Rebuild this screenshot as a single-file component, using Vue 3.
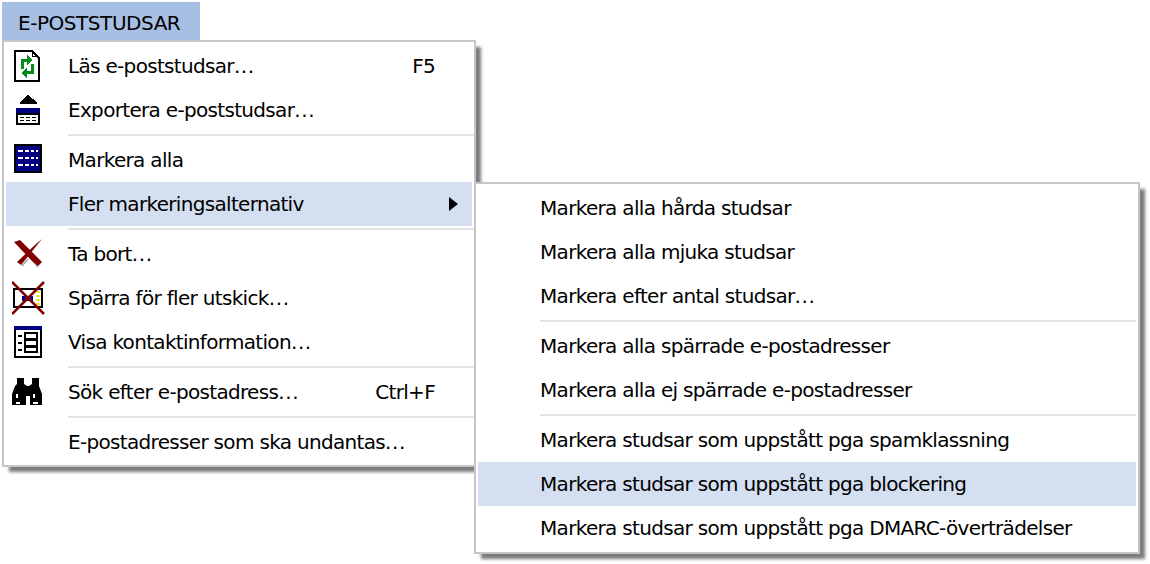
<template>
  <div class="page">
    <div class="title">E-POSTSTUDSAR</div>
    <div class="menu main">
      <template v-for="(item, i) in mainItems" :key="i">
        <div v-if="item.sep" class="sep"></div>
        <div v-else class="row" :class="{ active: item.sub }">
          <span class="icon">
            <svg v-if="item.icon === 'read'" width="34" height="36" viewBox="0 0 34 36" shape-rendering="crispEdges">
              <path d="M3 3H20L27 10V33H3Z" fill="#fff" stroke="#000" stroke-width="2" />
              <path d="M20 3V8H25V10" fill="none" stroke="#000" stroke-width="1" />
              <path d="M15 7L21 12L15 17V14H12V21H9V11H15Z" fill="#0a8a1c" />
              <path d="M15 30L9 25L15 20V23H19V16H22V26H15Z" fill="#0a8a1c" />
            </svg>
            <svg v-else-if="item.icon === 'export'" width="34" height="36" viewBox="0 0 34 36" shape-rendering="crispEdges">
              <path d="M16 3L25 10H8Z" fill="#000" />
              <rect x="8" y="10" width="17" height="2" fill="#000" />
              <rect x="4" y="16" width="24" height="6" fill="#000080" />
              <rect x="5" y="22" width="22" height="10" fill="#fff" stroke="#000" stroke-width="2" />
              <path d="M8 25h4v1H8zM14 25h4v1h-4zM20 25h4v1h-4zM8 28h4v1H8zM14 28h4v1h-4zM20 28h4v1h-4z" fill="#000" />
            </svg>
            <svg v-else-if="item.icon === 'grid'" width="34" height="36" viewBox="0 0 34 36" shape-rendering="crispEdges">
              <rect x="2" y="2" width="28" height="29" fill="#000" />
              <rect x="4" y="4" width="24" height="25" fill="#000080" />
              <path d="M6 8h20v2H6zM6 15h20v2H6zM6 22h20v2H6z" fill="#fff" />
              <path d="M11 8h2v2h-2zM17 8h2v2h-2zM22 8h2v2h-2zM11 15h2v2h-2zM17 15h2v2h-2zM22 15h2v2h-2zM11 22h2v2h-2zM17 22h2v2h-2zM22 22h2v2h-2z" fill="#000080" />
            </svg>
            <svg v-else-if="item.icon === 'delete'" width="34" height="36" viewBox="0 0 34 36">
              <path d="M10 30L16 23M21 25L26 31" fill="none" stroke="#a0a0a0" stroke-width="1.5" />
              <path d="M2 6L8 4L30 26L26 30L20 25Z" fill="#800000" />
              <path d="M30 3L9 29L5 26L24 8Z" fill="#800000" />
            </svg>
            <svg v-else-if="item.icon === 'block'" width="34" height="36" viewBox="0 0 34 36">
              <rect x="2" y="9" width="28" height="18" fill="#fff" stroke="#000" stroke-width="2" shape-rendering="crispEdges" />
              <path d="M26 11v14" stroke="#f0e000" stroke-width="3" stroke-dasharray="2 2" />
              <rect x="10" y="16" width="11" height="5" fill="#000080" />
              <path d="M0 2L32 34M32 2L0 34" stroke="#800000" stroke-width="2.5" />
            </svg>
            <svg v-else-if="item.icon === 'contact'" width="34" height="36" viewBox="0 0 34 36" shape-rendering="crispEdges">
              <rect x="3" y="3" width="26" height="30" fill="#fff" stroke="#000" stroke-width="2" />
              <rect x="2" y="2" width="28" height="4" fill="#000080" />
              <path d="M6 11h4v2H6zM6 18h4v2H6zM6 25h4v2H6z" fill="#000" />
              <path d="M13 9h12v6H13zM13 16h12v6H13zM13 23h12v5H13z" fill="none" stroke="#000" stroke-width="2" />
            </svg>
            <svg v-else-if="item.icon === 'find'" width="34" height="36" viewBox="0 0 34 36">
              <path d="M5 4H12V10L15 12H17L20 10V4H27V12L30 20V31H18V22H14V31H0V20L3 12L5 10Z" fill="#000" />
              <path d="M4 20h2v4H4zM21 20h2v4h-2zM4 28h4v2H4zM21 28h5v2h-5z" fill="#fff" shape-rendering="crispEdges" />
            </svg>
          </span>
          <span class="label">{{ textOf(item.label) }}<span v-if="hasDots(item.label)" class="dots">...</span></span>
          <span v-if="item.key" class="key">{{ item.key }}</span>
          <span v-if="item.sub" class="arrow"></span>
          <div v-if="item.sub" class="menu submenu">
            <template v-for="(entry, j) in subItems" :key="j">
              <div v-if="entry.sep" class="sep"></div>
              <div v-else class="row" :class="{ active: entry.active }">
                <span class="icon"></span>
                <span class="label">{{ textOf(entry.label) }}<span v-if="hasDots(entry.label)" class="dots">...</span></span>
              </div>
            </template>
          </div>
        </div>
      </template>
    </div>
  </div>
</template>

<script setup>
const mainItems = [
  { label: 'Läs e-poststudsar...', key: 'F5', icon: 'read' },
  { label: 'Exportera e-poststudsar...', icon: 'export' },
  { sep: true },
  { label: 'Markera alla', icon: 'grid' },
  { label: 'Fler markeringsalternativ', sub: true },
  { sep: true },
  { label: 'Ta bort...', icon: 'delete' },
  { label: 'Spärra för fler utskick...', icon: 'block' },
  { label: 'Visa kontaktinformation...', icon: 'contact' },
  { sep: true },
  { label: 'Sök efter e-postadress...', key: 'Ctrl+F', icon: 'find' },
  { sep: true },
  { label: 'E-postadresser som ska undantas...' }
]

const subItems = [
  { label: 'Markera alla hårda studsar' },
  { label: 'Markera alla mjuka studsar' },
  { label: 'Markera efter antal studsar...' },
  { sep: true },
  { label: 'Markera alla spärrade e-postadresser' },
  { label: 'Markera alla ej spärrade e-postadresser' },
  { sep: true },
  { label: 'Markera studsar som uppstått pga spamklassning' },
  { label: 'Markera studsar som uppstått pga blockering', active: true },
  { label: 'Markera studsar som uppstått pga DMARC-överträdelser' }
]

// The dots in the reference sit wider apart than the rest of the text
function hasDots(label) {
  return label.endsWith('...')
}

function textOf(label) {
  return hasDots(label) ? label.slice(0, -3) : label
}
</script>

<style>
html, body {
  margin: 0;
  background: #fff;
}
</style>

<style scoped>
.page {
  width: 1150px;
  height: 564px;
  padding: 2px;
  box-sizing: border-box;
  overflow: hidden;
  font-family: "DejaVu Sans", sans-serif;
  font-size: 20px;
  letter-spacing: -0.68px;
  color: #000;
}

.title {
  width: 198px;
  height: 38px;
  line-height: 42px;
  padding-left: 16px;
  box-sizing: border-box;
  background: #a6bfe3;
  letter-spacing: -0.45px;
}

.menu {
  box-sizing: border-box;
  background: #fff;
  border: 2px solid #c6c6c6;
  box-shadow: 6px 6px 3px -1px #7c7c7c;
}

.main {
  width: 474px;
  padding: 2px 0 1px 2px;
}

.submenu {
  position: absolute;
  top: 0;
  left: 468px;
  width: 666px;
  padding: 2px 2px 2px 2px;
}

.row {
  position: relative;
  display: flex;
  align-items: center;
  height: 44px;
  width: 466px;
}

.submenu .row {
  width: 658px;
}

.active {
  background: #d4dff1;
}

.submenu .row .icon {
  width: 62px;
}

.icon {
  flex: none;
  width: 62px;
  display: flex;
  align-items: center;
  padding-left: 6px;
  box-sizing: border-box;
}

.label {
  flex: 1;
  white-space: nowrap;
}

.dots {
  letter-spacing: 0.6px;
}

.key {
  margin-right: 37px;
}

.arrow {
  position: absolute;
  left: 443px;
  top: 15px;
  border-left: 9px solid #000;
  border-top: 7px solid transparent;
  border-bottom: 7px solid transparent;
}

.sep {
  height: 2px;
  margin: 2px 0 2px 62px;
  background: #e3e3e8;
}
</style>
